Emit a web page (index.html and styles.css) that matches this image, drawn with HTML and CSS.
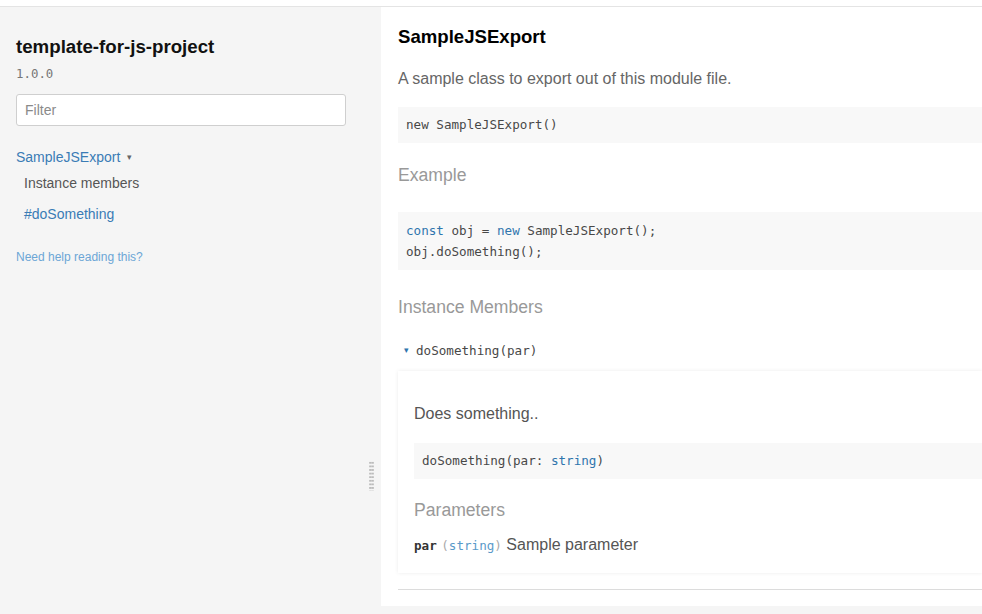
FILE: index.html
```html
<!DOCTYPE html>
<html>
<head>
<meta charset="utf-8">
<link rel="stylesheet" href="styles.css">
</head>
<body>
<div class="layout">
  <aside class="sidebar">
    <h3 class="proj-name">template-for-js-project</h3>
    <div class="version">1.0.0</div>
    <input class="filter" type="text" placeholder="Filter">
    <div class="toc-class"><a class="link">SampleJSExport</a><span class="caret">▾</span></div>
    <div class="toc-sub">Instance members</div>
    <div class="toc-member"><a class="link">#doSomething</a></div>
    <div class="help"><a>Need help reading this?</a></div>
    <div class="gutter"></div>
  </aside>
  <main class="content">
    <h3 class="cls-title">SampleJSExport</h3>
    <p class="desc">A sample class to export out of this module file.</p>
    <pre class="code one first">new SampleJSExport()</pre>
    <div class="sec-head">Example</div>
    <pre class="code two"><span class="kw">const</span> obj = <span class="kw">new</span> SampleJSExport();
obj.doSomething();</pre>
    <div class="sec-head">Instance Members</div>
    <div class="member-toggle"><span class="tri">▾</span><span class="mono">doSomething(par)</span></div>
    <div class="card">
      <p class="desc dark">Does something..</p>
      <pre class="code one">doSomething(par: <span class="kw">string</span>)</pre>
      <div class="sec-head sub">Parameters</div>
      <div class="param"><span class="pname">par</span> <span class="ptype">(<span class="kw">string</span>)</span> <span class="pdesc">Sample parameter</span></div>
    </div>
    <div class="rule"></div>
  </main>
</div>
</body>
</html>
```
FILE: styles.css
```css
html, body {
  margin: 0;
  padding: 0;
  background: #fff;
}
body {
  font-family: "Liberation Sans", Arial, sans-serif;
  padding-top: 6px;
  overflow: hidden;
  height: 614px;
  box-sizing: border-box;
}
.layout {
  display: flex;
  border-top: 1px solid #e4e4e4;
  background: #f5f5f5;
  height: 607px;
  align-items: flex-start;
}
.sidebar {
  position: relative;
  width: 381px;
  flex: none;
  box-sizing: border-box;
  padding: 28px 36px 0 16px;
  align-self: stretch;
  background: #f5f5f5;
}
.proj-name {
  margin: 0;
  font-size: 18.7px;
  line-height: 24px;
  font-weight: bold;
  color: #111;
}
.version {
  margin-top: 6px;
  font-family: "DejaVu Sans Mono", "Liberation Mono", monospace;
  font-size: 12.4px;
  line-height: 18px;
  color: #777;
}
.filter {
  display: block;
  margin-top: 11px;
  width: 330px;
  height: 32px;
  box-sizing: border-box;
  border: 1px solid #cfcfcf;
  border-radius: 3px;
  padding: 0 8px;
  font-family: "Liberation Sans", Arial, sans-serif;
  font-size: 14px;
  background: #fff;
  outline: none;
}
.filter::placeholder {
  color: #8a8a8a;
}
.toc-class {
  margin-top: 21px;
  font-size: 14px;
  line-height: 20px;
}
.link {
  color: #3a7cb5;
  text-decoration: none;
}
.caret {
  font-size: 9px;
  color: #666;
  margin-left: 7px;
  vertical-align: 2px;
}
.toc-sub {
  margin-top: 6px;
  padding-left: 8px;
  font-size: 14px;
  line-height: 20px;
  color: #555;
}
.toc-member {
  margin-top: 11px;
  padding-left: 8px;
  font-size: 14px;
  line-height: 20px;
}
.help {
  margin-top: 25px;
  font-size: 12px;
  line-height: 16px;
}
.help a {
  color: #6ca6d6;
}
.gutter {
  position: absolute;
  left: 369px;
  top: 454px;
  width: 5px;
  height: 30px;
  background-image: radial-gradient(circle, #b8b8b8 0.9px, transparent 1.1px);
  background-size: 2.5px 3.6px;
}
.content {
  flex: 1;
  min-width: 0;
  background: #fff;
  padding: 18px 0 16px 17px;
  overflow: hidden;
}
.cls-title {
  margin: 0;
  font-size: 18.6px;
  line-height: 24px;
  font-weight: bold;
  color: #000;
}
.desc {
  margin: 19px 0 0;
  font-size: 16px;
  line-height: 22px;
  color: #666;
}
.desc.dark {
  margin-top: 0;
  color: #555;
}
.code {
  margin: 18px 0 0;
  background: #f8f8f8;
  font-family: "DejaVu Sans Mono", "Liberation Mono", monospace;
  font-size: 12.6px;
  color: #484848;
  padding: 8px 8px;
}
.code.first {
  margin-top: 17px;
}
.code.one {
  line-height: 20px;
}
.code.two {
  margin-top: 25px;
  line-height: 21px;
}
.kw {
  color: #2f75ad;
}
.sec-head {
  margin-top: 20px;
  font-size: 17.6px;
  line-height: 24px;
  color: #999;
}
.code.two + .sec-head {
  margin-top: 25px;
}
.sec-head.sub {
  margin-top: 19px;
}
.member-toggle {
  margin-top: 21px;
  line-height: 20px;
  padding-left: 6px;
}
.tri {
  font-size: 9px;
  color: #2f75ad;
  vertical-align: 2px;
  margin-right: 7px;
}
.mono {
  font-family: "DejaVu Sans Mono", "Liberation Mono", monospace;
  font-size: 12.6px;
  color: #484848;
}
.card {
  margin-top: 10px;
  padding: 32px 0 16px 16px;
  background: #fff;
  box-shadow: 0 0 4px rgba(0, 0, 0, 0.08);
}
.param {
  margin-top: 12px;
  line-height: 22px;
}
.pname {
  font-family: "DejaVu Sans Mono", "Liberation Mono", monospace;
  font-size: 12.6px;
  font-weight: bold;
  color: #333;
}
.ptype {
  font-family: "DejaVu Sans Mono", "Liberation Mono", monospace;
  font-size: 12.6px;
  color: #aaa;
}
.ptype .kw {
  color: #5a9ac9;
}
.pdesc {
  font-size: 16px;
  color: #555;
}
.rule {
  margin-top: 16px;
  height: 1px;
  background: #dcdcdc;
}
```
